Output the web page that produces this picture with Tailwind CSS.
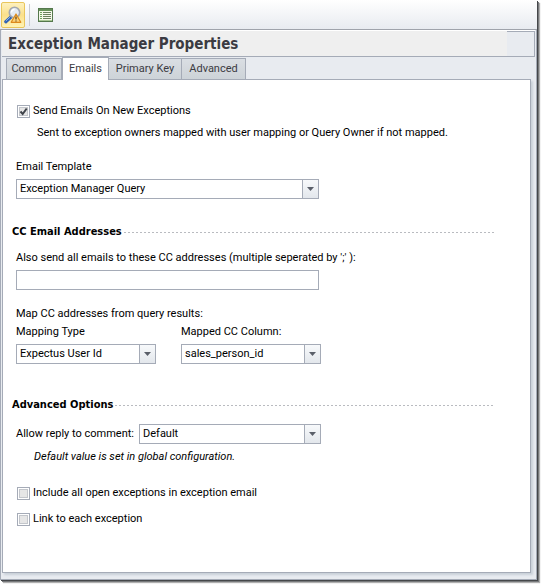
<!DOCTYPE html>
<html lang="en">
<head>
    <meta charset="UTF-8">
    <meta name="viewport" content="width=device-width, initial-scale=1.0">
    <title>Exception Manager Properties</title>
    <script src="https://cdn.jsdelivr.net/npm/@tailwindcss/browser@4"></script>
</head>
<body class="bg-white font-['Roboto',sans-serif] text-[11px] leading-4 text-black">
    <div class="min-h-screen flex pr-1 pb-1">
        <div class="flex-1 flex flex-col bg-[#e8ebf0] shadow-[1px_1px_0_#45474a,2px_2px_0_#77797b,3px_3px_1px_#b0b0b0]">
            <!-- Toolbar -->
            <header class="h-[29px] flex items-center bg-linear-to-b from-white to-[#e8ebf0]">
                <button type="button" aria-label="Find exceptions" class="ml-px mt-px w-6 h-[26px] flex items-center justify-center rounded-[2px] border border-[#e9c65c] bg-linear-to-b from-[#fdf1bf] via-[#fbe08a] to-[#fff3b4]">
                    <svg class="size-[18px] shrink-0" viewBox="0 0 18 18">
                        <path d="M1.8 15.7 L7 11" stroke="#2f62b4" stroke-width="3.2" stroke-linecap="round"/>
                        <path d="M1.8 15 L6 11.2" stroke="#8fb6ec" stroke-width="1"/>
                        <circle cx="10.5" cy="6.5" r="5.2" fill="#e4ebf2" stroke="#a3a8b0" stroke-width="1.6"/>
                        <path d="M7.5 6.5 a3 3 0 0 1 3-3" fill="none" stroke="#fff" stroke-width="1.4"/>
                        <path d="M12 8 L16.8 16.3 H7.2 Z" fill="#fbd27a" stroke="#dd8a1c" stroke-width="1.2" stroke-linejoin="round"/>
                        <path d="M12 10.5 V13.4 M12 14.4 V15.5" stroke="#5b3a0c" stroke-width="1.2"/>
                    </svg>
                </button>
                <div class="ml-1 w-px h-[22px] bg-[#c9ccd2]"></div>
                <button type="button" aria-label="Show list" class="ml-2 flex">
                    <svg class="w-[15px] h-[14px]" viewBox="0 0 15 14">
                        <rect x=".5" y=".5" width="14" height="13" fill="#f4f8ea" stroke="#55784d"/>
                        <rect x="1" y="1" width="13" height="2" fill="#66915a"/>
                        <path d="M2 4.5h2M2 6.5h2M2 8.5h2M2 10.5h2" stroke="#6da05c"/>
                        <path d="M5 4.5h8M5 6.5h8M5 8.5h8M5 10.5h8" stroke="#6b7f60"/>
                        <path d="M1 12.5h13" stroke="#a9c795"/>
                    </svg>
                </button>
            </header>

            <main class="flex-1 flex flex-col border border-t-[#9fa3ab] border-[#a5abb7] pl-px pr-[5px] pb-[6px]">
                <!-- Title bar -->
                <div class="-mr-1 h-[27px] flex border-y border-t-white border-b-[#a5abb7] bg-[#efefef]">
                    <h1 class="flex-1 pl-[6px] font-['DejaVu_Sans_Condensed',sans-serif] text-[15px] leading-[26px] font-bold text-[#3b3b42]">Exception Manager Properties</h1>
                    <div class="w-7 border-t border-r border-[#a5abb7] bg-[#e8ebf0]"></div>
                </div>

                <nav class="h-[22px] flex items-end pl-1 text-[#3b3b42]">
                    <button type="button" class="h-[21px] w-14 border border-b-0 border-[#a5abb7] bg-linear-to-b from-[#dadee3] to-[#cdd3d8]">Common</button>
                    <button type="button" class="relative z-10 -mb-px h-[23px] w-[47px] pb-px bg-white border border-b-0 border-[#a5abb7]">Emails</button>
                    <button type="button" class="h-[21px] w-[73px] border border-l-0 border-b-0 border-[#a5abb7] bg-linear-to-b from-[#dadee3] to-[#cdd3d8]">Primary Key</button>
                    <button type="button" class="h-[21px] w-16 border border-l-0 border-b-0 border-[#a5abb7] bg-linear-to-b from-[#dadee3] to-[#cdd3d8]">Advanced</button>
                </nav>

                <form class="flex-1 bg-white border border-[#a5abb7] pt-[23px] pl-[9px] pr-9 pb-10 shadow-[2px_2px_2px_#c9d0d9]">
                    <div class="pl-1">
                        <label class="flex items-center gap-[3px] pl-px">
                            <input type="checkbox" checked class="peer appearance-none size-[13px] border border-[#a5abb7] bg-[#e6e6e6] shadow-[inset_0_0_0_1px_#fff,inset_0_0_0_2px_#c3c6cb]">
                            <svg class="absolute hidden peer-checked:block size-[13px]" viewBox="0 0 13 13"><path d="M3.5 6.5 L5.7 9 L9.7 3.5" fill="none" stroke="#3f434a" stroke-width="2"/></svg>
                            Send Emails On New Exceptions
                        </label>
                        <p class="mt-[6px] pl-[21px]">Sent to exception owners mapped with user mapping or Query Owner if not mapped.</p>

                        <label for="template" class="block mt-[18px]">Email Template</label>
                        <div class="relative mt-1 w-[303px] h-5">
                            <select id="template" class="appearance-none size-full pl-[3px] border border-[#a5abb7] bg-white"><option>Exception Manager Query</option></select>
                            <span class="pointer-events-none absolute inset-y-px right-px w-4 flex items-center justify-center border-l border-[#a5abb7] bg-linear-to-b from-[#f7f9fb] to-[#e3e7ec]">
                                <svg class="w-[7px] h-1" viewBox="0 0 7 4"><path d="M0 0h7L3.5 4z" fill="#5a5f69"/></svg>
                            </span>
                        </div>
                    </div>

                    <h2 class="mt-[25px] flex items-center gap-[2px] font-['DejaVu_Sans_Condensed',sans-serif] font-bold">CC Email Addresses
                        <span class="flex-1 h-px bg-[repeating-linear-gradient(90deg,#b9bbc0_0_2px,transparent_2px_4px)]"></span>
                    </h2>
                    <div class="mt-[10px] pl-1">
                        <label for="cc" class="block">Also send all emails to these CC addresses (multiple seperated by ';' ):</label>
                        <input id="cc" type="text" class="block mt-1 w-[303px] h-5 px-1 border border-[#a5abb7] bg-white">

                        <p class="mt-4">Map CC addresses from query results:</p>
                        <div class="mt-[2px] flex gap-[25px]">
                            <div>
                                <label for="mapping" class="block">Mapping Type</label>
                                <div class="relative mt-1 w-[140px] h-5">
                                    <select id="mapping" class="appearance-none size-full pl-[3px] border border-[#a5abb7] bg-white"><option>Expectus User Id</option></select>
                                    <span class="pointer-events-none absolute inset-y-px right-px w-4 flex items-center justify-center border-l border-[#a5abb7] bg-linear-to-b from-[#f7f9fb] to-[#e3e7ec]">
                                        <svg class="w-[7px] h-1" viewBox="0 0 7 4"><path d="M0 0h7L3.5 4z" fill="#5a5f69"/></svg>
                                    </span>
                                </div>
                            </div>
                            <div>
                                <label for="column" class="block">Mapped CC Column:</label>
                                <div class="relative mt-1 w-[140px] h-5">
                                    <select id="column" class="appearance-none size-full pl-[3px] border border-[#a5abb7] bg-white"><option>sales_person_id</option></select>
                                    <span class="pointer-events-none absolute inset-y-px right-px w-4 flex items-center justify-center border-l border-[#a5abb7] bg-linear-to-b from-[#f7f9fb] to-[#e3e7ec]">
                                        <svg class="w-[7px] h-1" viewBox="0 0 7 4"><path d="M0 0h7L3.5 4z" fill="#5a5f69"/></svg>
                                    </span>
                                </div>
                            </div>
                        </div>
                    </div>

                    <h2 class="mt-[33px] flex items-center gap-[2px] font-['DejaVu_Sans_Condensed',sans-serif] font-bold">Advanced Options
                        <span class="flex-1 h-px bg-[repeating-linear-gradient(90deg,#b9bbc0_0_2px,transparent_2px_4px)]"></span>
                    </h2>
                    <div class="mt-[11px] pl-1">
                        <div class="flex items-center w-[305px]">
                            <label for="reply" class="w-[123px] whitespace-nowrap">Allow reply to comment:</label>
                            <div class="relative flex-1 h-5">
                                <select id="reply" class="appearance-none size-full pl-[3px] border border-[#a5abb7] bg-white"><option>Default</option></select>
                                <span class="pointer-events-none absolute inset-y-px right-px w-4 flex items-center justify-center border-l border-[#a5abb7] bg-linear-to-b from-[#f7f9fb] to-[#e3e7ec]">
                                    <svg class="w-[7px] h-1" viewBox="0 0 7 4"><path d="M0 0h7L3.5 4z" fill="#5a5f69"/></svg>
                                </span>
                            </div>
                        </div>
                        <p class="mt-[5px] pl-[18px] italic">Default value is set in global configuration.</p>
                        <label class="mt-5 flex items-center gap-[3px] pl-px">
                            <input type="checkbox" class="appearance-none size-[13px] border border-[#a5abb7] bg-[#e6e6e6] shadow-[inset_0_0_0_1px_#fff,inset_0_0_0_2px_#c3c6cb]">
                            Include all open exceptions in exception email
                        </label>
                        <label class="mt-[10px] flex items-center gap-[3px] pl-px">
                            <input type="checkbox" class="appearance-none size-[13px] border border-[#a5abb7] bg-[#e6e6e6] shadow-[inset_0_0_0_1px_#fff,inset_0_0_0_2px_#c3c6cb]">
                            Link to each exception
                        </label>
                    </div>
                </form>
            </main>
        </div>
    </div>
</body>
</html>
